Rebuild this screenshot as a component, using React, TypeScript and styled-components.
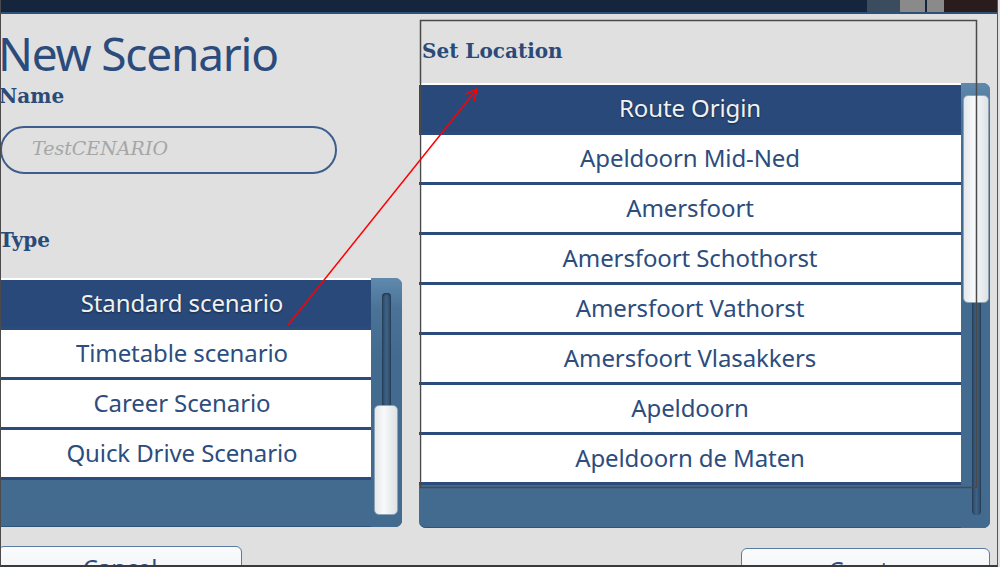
import React from "react";
import styled, { createGlobalStyle } from "styled-components";

const GlobalStyle = createGlobalStyle`
  html, body {
    margin: 0;
    padding: 0;
    background: #e0e0e0;
    overflow: hidden;
  }
`;

const Frame = styled.div`
  position: relative;
  width: 998px;
  height: 567px;
  box-sizing: border-box;
  background: #e0e0e0;
  border-left: 1px solid #4b4b4b;
  border-right: 1px solid #555;
  border-bottom: 2px solid #3a3a3a;
  overflow: hidden;
  display: flex;
  flex-direction: column;
`;

const TopBar = styled.div`
  height: 12px;
  flex: none;
  background: #15253e;
  border-bottom: 2px solid #2f5079;
  display: flex;
  justify-content: flex-end;
`;

const Chip = styled.div<{ $w: number; $bg: string; $gap?: number }>`
  width: ${p => p.$w}px;
  margin-left: ${p => p.$gap || 0}px;
  background: ${p => p.$bg};
`;

const Content = styled.div`
  display: grid;
  grid-template-columns: 409px 571px;
  column-gap: 17px;
  margin-left: -8px;
`;

const Column = styled.div`
  display: flex;
  flex-direction: column;
`;

const Title = styled.h1`
  margin: 15px 0 0 5px;
  font-family: "Noto Sans", sans-serif;
  font-weight: 400;
  font-size: 46px;
  line-height: 48px;
  letter-spacing: -1.2px;
  color: #2a4b7c;
  white-space: nowrap;
`;

const Label = styled.div<{ $mt: number; $pl: number }>`
  margin-top: ${p => p.$mt}px;
  padding-left: ${p => p.$pl}px;
  font-family: "DejaVu Serif", serif;
  font-weight: 700;
  font-size: 20px;
  line-height: 24px;
  color: #2b4a78;
`;

const NameInput = styled.input`
  margin: 18px 0 0 7px;
  width: 337px;
  height: 48px;
  box-sizing: border-box;
  border: 2px solid #3d5d8c;
  border-radius: 24px;
  background: transparent;
  padding: 0 0 4px 30px;
  font-family: "DejaVu Serif", serif;
  font-style: italic;
  font-size: 19px;
  outline: none;
  &::placeholder {
    color: #a6a6a6;
  }
`;

const Panel = styled.div<{ $mt: number; $height: number }>`
  margin-top: ${p => p.$mt}px;
  height: ${p => p.$height}px;
  display: flex;
  background: #436b90;
  border-radius: 0 7px 7px 7px;
  box-shadow: inset 0 -1px 0 #2f5478;
`;

const Rows = styled.div`
  flex: 1;
  border-top: 2px solid #ffffff;
  display: flex;
  flex-direction: column;
`;

const Row = styled.div<{ $selected?: boolean }>`
  height: 50px;
  flex: none;
  box-sizing: border-box;
  padding-bottom: 2px;
  border-bottom: 3px solid #2a4b7b;
  background: ${p => (p.$selected ? "#28497a" : "#ffffff")};
  color: ${p => (p.$selected ? "#f1f1f1" : "#2c4d7d")};
  text-shadow: ${p => (p.$selected ? "0 1px 2px rgba(0,0,0,0.45)" : "none")};
  display: flex;
  align-items: center;
  justify-content: center;
  font-family: "Noto Sans", sans-serif;
  font-size: 24px;
  letter-spacing: -0.1px;
  white-space: nowrap;
`;

const ScrollCol = styled.div<{ $w: number; $pt: number; $pb: number; $pl: number; $pr: number }>`
  width: ${p => p.$w}px;
  box-sizing: border-box;
  padding: ${p => `${p.$pt}px ${p.$pr}px ${p.$pb}px ${p.$pl}px`};
  display: grid;
  background: linear-gradient(#6089ae, #4a7397 30px, #436b90 80px);
  border-radius: 0 7px 7px 0;
`;

const Groove = styled.div`
  grid-area: 1 / 1;
  justify-self: center;
  width: 9px;
  border-radius: 4px;
  background: linear-gradient(90deg, #2b4865, #3e6284 50%, #2b4865);
  box-shadow: inset 0 1px 2px rgba(0, 0, 0, 0.5);
`;

const Thumb = styled.div<{ $top: number; $height: number }>`
  grid-area: 1 / 1;
  align-self: start;
  margin-top: ${p => p.$top}px;
  height: ${p => p.$height}px;
  box-sizing: border-box;
  border: 1px solid #8fa3b6;
  border-radius: 5px;
  background: linear-gradient(90deg, #e4e8ec, #f8f9fa 40%, #dde2e6);
`;

const Button = styled.div<{ $ml: number; $w: number; $mt: number }>`
  margin: ${p => `${p.$mt}px 0 0 ${p.$ml}px`};
  width: ${p => p.$w}px;
  height: 48px;
  box-sizing: border-box;
  border: 1px solid #5b7ba0;
  border-radius: 6px;
  background: linear-gradient(#fafbfc, #eceff3);
  color: #2c4d7d;
  font-family: "Noto Sans", sans-serif;
  font-size: 24px;
  text-align: center;
  padding-top: 4px;
`;

const Overlay = styled.svg`
  position: absolute;
  left: -1px;
  top: 0;
  pointer-events: none;
`;

const scenarioTypes = ["Standard scenario", "Timetable scenario", "Career Scenario", "Quick Drive Scenario"];

const locations = [
  "Route Origin",
  "Apeldoorn Mid-Ned",
  "Amersfoort",
  "Amersfoort Schothorst",
  "Amersfoort Vathorst",
  "Amersfoort Vlasakkers",
  "Apeldoorn",
  "Apeldoorn de Maten",
];

export default function App() {
  return (
    <>
      <GlobalStyle />
      <Frame>
        <TopBar>
          <Chip $w={33} $bg="#3a4c5d" />
          <Chip $w={25} $bg="#8a8a8a" />
          <Chip $w={17} $bg="#8a8a8a" $gap={2} />
          <Chip $w={53} $bg="#2a1b1c" />
        </TopBar>
        <Content>
          <Column>
            <Title>New Scenario</Title>
            <Label $mt={7} $pl={6}>Name</Label>
            <NameInput placeholder="TestCENARIO" />
            <Label $mt={54} $pl={6}>Type</Label>
            <Panel $mt={26} $height={249}>
              <Rows>
                {scenarioTypes.map((t, i) => (
                  <Row key={t} $selected={i === 0}>{t}</Row>
                ))}
              </Rows>
              <ScrollCol $w={31} $pt={15} $pb={12} $pl={3} $pr={4}>
                <Groove />
                <Thumb $top={112} $height={110} />
              </ScrollCol>
            </Panel>
            <Button $ml={5} $w={244} $mt={19}>Cancel</Button>
          </Column>
          <Column>
            <Label $mt={25} $pl={3}>Set Location</Label>
            <Panel $mt={20} $height={445}>
              <Rows>
                {locations.map((l, i) => (
                  <Row key={l} $selected={i === 0}>{l}</Row>
                ))}
              </Rows>
              <ScrollCol $w={29} $pt={12} $pb={13} $pl={2} $pr={1}>
                <Groove />
                <Thumb $top={0} $height={208} />
              </ScrollCol>
            </Panel>
            <Button $ml={322} $w={249} $mt={20}>Create</Button>
          </Column>
        </Content>
        <Overlay width={1000} height={567} viewBox="0 0 1000 567">
          <rect x={420.5} y={20.5} width={556} height={467} fill="none" stroke="#4a4a4a" strokeWidth={1.5} />
          <line x1={288} y1={325} x2={477} y2={89} stroke="#ff0000" strokeWidth={1.5} />
          <polyline points="466,94 477,89 474,101" fill="none" stroke="#ff0000" strokeWidth={1.5} />
        </Overlay>
      </Frame>
    </>
  );
}
